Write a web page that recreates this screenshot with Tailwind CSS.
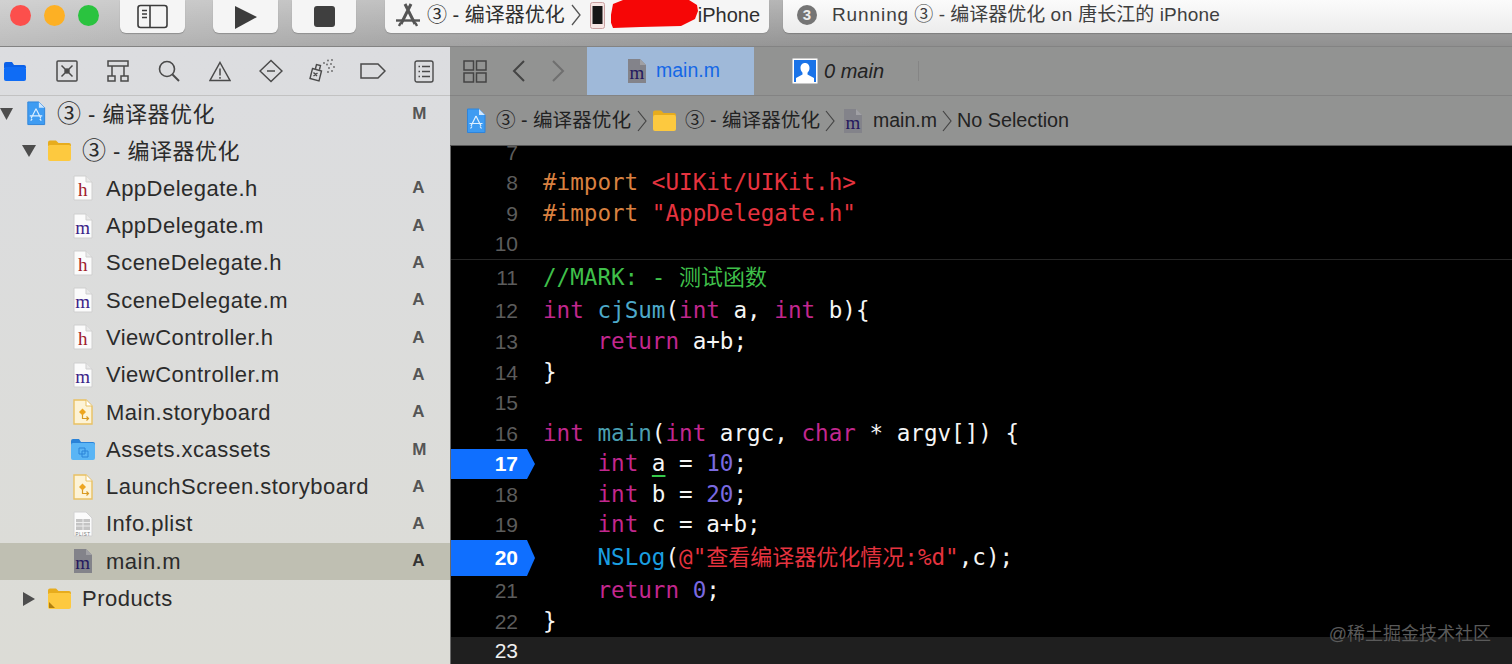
<!DOCTYPE html>
<html lang="zh">
<head>
<meta charset="UTF-8">
<title>Xcode</title>
<script src="https://cdn.jsdelivr.net/npm/@tailwindcss/browser@4"></script>
</head>
<body class="h-[664px] w-[1512px] overflow-hidden bg-black font-['Liberation_Sans','Noto_Sans_CJK_SC',sans-serif]">

<!-- shared file icons -->
<svg class="hidden">
  <symbol id="doc-h" viewBox="0 0 20 26"><path d="M1 1h12l6 6v18H1z" fill="#fbfbfb" stroke="#cfcfcf"/><path d="M13 1v6h6" fill="#e8e8e8" stroke="#cfcfcf"/><text x="10" y="21" text-anchor="middle" font-family="Liberation Serif" font-size="19" fill="#a01c2c">h</text></symbol>
  <symbol id="doc-m" viewBox="0 0 20 26"><path d="M1 1h12l6 6v18H1z" fill="#fbfbfb" stroke="#cfcfcf"/><path d="M13 1v6h6" fill="#e8e8e8" stroke="#cfcfcf"/><text x="10" y="21" text-anchor="middle" font-family="Liberation Serif" font-size="19" fill="#3b2488">m</text></symbol>
  <symbol id="doc-sel" viewBox="0 0 20 26"><path d="M1 1h12l6 6v18H1z" fill="#83838a"/><path d="M13 1l6 6h-6z" fill="#a0a0a4"/><text x="10" y="21" text-anchor="middle" font-family="Liberation Serif" font-size="19" fill="#25195e">m</text></symbol>
  <symbol id="doc-story" viewBox="0 0 20 26"><path d="M1 1h12l6 6v18H1z" fill="#fdf3d6" stroke="#e9c163" stroke-width="1.4"/><path d="M13 1v6h6" fill="#fff" stroke="#e9c163"/><path d="M9.500 9.500l3.500 3.500-3.500 3.500L6 13z" fill="#eda51f"/><path d="M9.500 16v3.500h6M13.500 17.500l2 2-2 2" fill="none" stroke="#d99a22" stroke-width="1.200"/></symbol>
  <symbol id="doc-plist" viewBox="0 0 20 26"><path d="M1 1h12l6 6v18H1z" fill="#fbfbfb" stroke="#d2d2d2"/><path d="M3 8h14v11H3z" fill="#c4c4c4"/><path d="M3 11.500h14M3 15h14M10 8v11" stroke="#ededed"/><text x="10" y="24.500" text-anchor="middle" font-family="Liberation Sans" font-size="4.500" fill="#777">PLIST</text></symbol>
  <symbol id="folder-y" viewBox="0 0 25 23"><path d="M1 3.500A2 2 0 0 1 3 1.500h6l2.500 2.500H22a2 2 0 0 1 2 2V7H1z" fill="#e7ac1d"/><rect x="1" y="6" width="23" height="16" rx="2" fill="#fdc93f"/></symbol>
  <symbol id="app-doc" viewBox="0 0 20 26"><path d="M1.500 1h11.500l6 6v17.500H1.500z" fill="#3f9cf2" stroke="#2f84da" stroke-linejoin="round"/><path d="M13 1l6 6h-6z" fill="#cfe7ff"/><path d="M10 8l-5 10M10 8l5 10M3.500 15.500h13M6 18.500l-1.500 2M14 18.500l1.500 2" stroke="#dff0ff" stroke-width="1.200" fill="none"/></symbol>
</svg>

<!-- window toolbar -->
<header class="relative flex h-[47px] items-start border-b border-[#838383] bg-[linear-gradient(to_bottom,#ffffff50,#ffffff00),linear-gradient(to_right,#bdbdbd,#a2a2a2_30%,#909090_60%)]">
  <div class="flex w-[120px] gap-[13px] pt-[5px] pl-[10px]">
    <span class="size-[21px] rounded-full bg-[#fc4f4c]"></span>
    <span class="size-[21px] rounded-full bg-[#fdb024]"></span>
    <span class="size-[21px] rounded-full bg-[#2ac33f]"></span>
  </div>
  <div class="flex h-[33px] w-[65px] items-center justify-center rounded-b-md bg-[#f5f5f5] shadow-[0_1px_1px_#8f8f8f]">
    <svg width="31" height="25" viewBox="0 0 31 25" fill="none" stroke="#3c3c3c" stroke-width="1.600"><rect x="1" y="1.500" width="29" height="22" rx="2.500"/><path d="M13 1.500v22M5 6.500h5M5 10h5M5 13.500h5"/></svg>
  </div>
  <div class="ml-[28px] flex h-[33px] w-[65px] items-center justify-center rounded-b-md bg-[#f5f5f5] shadow-[0_1px_1px_#8f8f8f]">
    <svg width="24" height="24" viewBox="0 0 24 24"><path d="M1 1l22 11L1 24z" fill="#3c3c3c"/></svg>
  </div>
  <div class="ml-[14px] flex h-[33px] w-[64px] items-center justify-center rounded-b-md bg-[#f5f5f5] shadow-[0_1px_1px_#8f8f8f]">
    <span class="size-[21px] rounded-[3px] bg-[#3f3f3f]"></span>
  </div>
  <div class="relative ml-[29px] flex h-[33px] w-[384px] items-center rounded-b-md bg-[#f5f5f5] pb-[3px] pl-[10px] text-[20px] text-[#2e2e2e] shadow-[0_1px_1px_#8f8f8f]">
    <svg width="26" height="26" viewBox="0 0 26 26" fill="none" stroke="#555" stroke-width="3"><path d="M10 2l10 20M16 2L6 22"/><path d="M1 18.500h24" stroke-width="2.400"/><path d="M5.500 21l-1.500 3M20.500 21l1.500 3" stroke-width="2.400"/></svg>
    <span class="ml-[6px] whitespace-pre">③ - 编译器优化</span>
    <svg class="ml-[6px]" width="10" height="24" viewBox="0 0 10 24" fill="none" stroke="#555" stroke-width="1.300"><path d="M1 2l8 10-8 10"/></svg>
    <svg class="ml-[9px]" width="15" height="27" viewBox="0 0 15 27"><rect x="0.500" y="0.500" width="14" height="26" rx="2" fill="#f6e5e3" stroke="#c9a0a0"/><rect x="2.500" y="4" width="10" height="18" fill="#161616"/></svg>
    <span class="ml-[93px]">iPhone</span>
    <svg class="absolute top-0 left-[226px]" width="90" height="29" viewBox="0 0 90 29"><path d="M2 4L12 0h66l8 5 1 6-3 8-14 7-40 1-28 1-3-8z" fill="#f60606"/></svg>
  </div>
  <div class="ml-[14px] flex h-[33px] flex-1 items-center rounded-bl-md bg-gradient-to-b from-[#fbfbfb] to-[#ececec] pb-[3px] pl-[14px] text-[19px] whitespace-pre text-[#3f3f3f] shadow-[0_1px_1px_#7f7f7f]">
    <span class="flex size-[20px] items-center justify-center rounded-full bg-[#757575] text-[15px] font-bold text-[#ececec]">3</span>
    <span class="ml-[15px]"><span class="tracking-[0.9px]">Running</span> ③ - 编译器优化 <span class="tracking-[0.7px]">on</span> 唐长江的 <span class="tracking-[0.2px]">iPhone</span></span>
  </div>
</header>

<div class="flex h-[617px]">
  <!-- navigator -->
  <aside class="w-[450px] shrink-0 bg-gradient-to-b from-[#dcdde0] to-[#dcdcd6] text-[22px] tracking-[0.48px] text-[#2b2b2b]">
    <nav class="flex h-[49px] items-center border-b border-[#c2c2c2]">
      <div class="flex w-[30px] justify-center"><svg width="24" height="21" viewBox="0 0 24 21"><path d="M1 3a2 2 0 0 1 2-2h6l2 3h10a2 2 0 0 1 2 2v1H1z" fill="#0a60e8"/><rect x="1" y="6" width="22" height="14" rx="2" fill="#0f6cf5"/></svg></div>
      <div class="ml-[11px] flex w-[51px] justify-center"><svg width="22" height="22" viewBox="0 0 22 22" fill="none" stroke="#4a4a4a" stroke-width="1.500"><rect x="1" y="1" width="20" height="20" rx="1"/><path d="M5.500 5.500l4 4M16.500 5.500l-4 4M5.500 16.500l4-4M16.500 16.500l-4-4"/><circle cx="11" cy="11" r="2" fill="#4a4a4a"/></svg></div>
      <div class="flex w-[51px] justify-center"><svg width="22" height="22" viewBox="0 0 22 22" fill="none" stroke="#4a4a4a" stroke-width="1.500"><rect x="1" y="1" width="20" height="5"/><path d="M5 6v10M17 6v10"/><rect x="1" y="16" width="7" height="5"/><rect x="14" y="16" width="7" height="5"/></svg></div>
      <div class="flex w-[51px] justify-center"><svg width="22" height="22" viewBox="0 0 22 22" fill="none" stroke="#4a4a4a" stroke-width="1.600"><circle cx="9" cy="9" r="7.500"/><path d="M14.500 14.500l6.500 6.500" stroke-width="2"/></svg></div>
      <div class="flex w-[51px] justify-center"><svg width="22" height="21" viewBox="0 0 22 21" fill="none" stroke="#4a4a4a" stroke-width="1.500"><path d="M11 1.500L21 19.500H1z"/><path d="M11 7.500v7M11 16v1.800"/></svg></div>
      <div class="flex w-[51px] justify-center"><svg width="24" height="24" viewBox="0 0 24 24" fill="none" stroke="#4a4a4a" stroke-width="1.500"><path d="M12 1.500L23 12 12 22.500 1 12z"/><path d="M8 12h8"/></svg></div>
      <div class="flex w-[51px] justify-center"><svg width="26" height="24" viewBox="0 0 26 24" fill="none" stroke="#4a4a4a" stroke-width="1.400"><path d="M3.500 9.500l9 2.500-2.500 10-9-2.500zM6.500 9.500l1-4 4 1-1 4M4.500 13.500l3.500 3.500M8.500 14l-4 3"/><g fill="#666" stroke="none"><circle cx="15" cy="4" r=".9"/><circle cx="19" cy="1.500" r=".9"/><circle cx="23" cy="1" r=".9"/><circle cx="18" cy="5.500" r=".9"/><circle cx="22" cy="5" r=".9"/><circle cx="25" cy="8" r=".9"/><circle cx="20" cy="9" r=".9"/><circle cx="23" cy="12" r=".9"/><circle cx="19" cy="13" r=".9"/></g></svg></div>
      <div class="flex w-[51px] justify-center"><svg width="26" height="16" viewBox="0 0 26 16" fill="none" stroke="#4a4a4a" stroke-width="1.500"><path d="M1 1h17l7 7-7 7H1z"/></svg></div>
      <div class="flex w-[51px] justify-center"><svg width="20" height="23" viewBox="0 0 20 23" fill="none" stroke="#4a4a4a" stroke-width="1.400"><rect x="1" y="1" width="18" height="21" rx="2"/><path d="M4.500 6.500h1.500M8 6.500h8M4.500 11.500h1.500M8 11.500h8M4.500 16.500h1.500M8 16.500h8"/></svg></div>
    </nav>
    <ul class="mt-[-1px]">
      <li class="flex h-[37.300px] items-center">
        <svg width="13" height="12" viewBox="0 0 13 12"><path d="M0 0h13L6.500 12z" fill="#4d4d4d"/></svg>
        <svg class="ml-[13px]" width="20" height="25"><use href="#app-doc"/></svg>
        <span class="ml-[11px] whitespace-pre"><span class="text-[24px]">③</span> - 编译器优化</span>
        <span class="mr-[23px] ml-auto text-[17px] font-bold text-[#555]">M</span>
      </li>
      <li class="flex h-[37.300px] items-center pl-[22px]">
        <svg width="14" height="12" viewBox="0 0 14 12"><path d="M0 0h14L7 12z" fill="#4d4d4d"/></svg>
        <svg class="ml-[11px]" width="25" height="23"><use href="#folder-y"/></svg>
        <span class="ml-[10px] whitespace-pre"><span class="text-[24px]">③</span> - 编译器优化</span>
      </li>
      <li class="flex h-[37.300px] items-center pl-[73px]"><svg width="20" height="26"><use href="#doc-h"/></svg><span class="ml-[13px]">AppDelegate.h</span><span class="mr-[25px] ml-auto text-[17px] font-bold text-[#555]">A</span></li>
      <li class="flex h-[37.300px] items-center pl-[73px]"><svg width="20" height="26"><use href="#doc-m"/></svg><span class="ml-[13px]">AppDelegate.m</span><span class="mr-[25px] ml-auto text-[17px] font-bold text-[#555]">A</span></li>
      <li class="flex h-[37.300px] items-center pl-[73px]"><svg width="20" height="26"><use href="#doc-h"/></svg><span class="ml-[13px]">SceneDelegate.h</span><span class="mr-[25px] ml-auto text-[17px] font-bold text-[#555]">A</span></li>
      <li class="flex h-[37.300px] items-center pl-[73px]"><svg width="20" height="26"><use href="#doc-m"/></svg><span class="ml-[13px]">SceneDelegate.m</span><span class="mr-[25px] ml-auto text-[17px] font-bold text-[#555]">A</span></li>
      <li class="flex h-[37.300px] items-center pl-[73px]"><svg width="20" height="26"><use href="#doc-h"/></svg><span class="ml-[13px]">ViewController.h</span><span class="mr-[25px] ml-auto text-[17px] font-bold text-[#555]">A</span></li>
      <li class="flex h-[37.300px] items-center pl-[73px]"><svg width="20" height="26"><use href="#doc-m"/></svg><span class="ml-[13px]">ViewController.m</span><span class="mr-[25px] ml-auto text-[17px] font-bold text-[#555]">A</span></li>
      <li class="flex h-[37.300px] items-center pl-[73px]"><svg width="20" height="26"><use href="#doc-story"/></svg><span class="ml-[13px]">Main.storyboard</span><span class="mr-[25px] ml-auto text-[17px] font-bold text-[#555]">A</span></li>
      <li class="flex h-[37.300px] items-center pl-[71px]">
        <svg width="24" height="23" viewBox="0 0 24 23"><path d="M0 3a2 2 0 0 1 2-2h6l2 3h12a2 2 0 0 1 2 2v1H0z" fill="#2a83d8"/><rect y="5" width="24" height="17" rx="2" fill="#5ab5f5"/><path d="M8 10h6v6H8zM11 13h6v6h-6z" fill="none" stroke="#2a83d8"/></svg>
        <span class="ml-[11px]">Assets.xcassets</span><span class="mr-[23px] ml-auto text-[17px] font-bold text-[#555]">M</span>
      </li>
      <li class="flex h-[37.300px] items-center pl-[73px]"><svg width="20" height="26"><use href="#doc-story"/></svg><span class="ml-[13px]">LaunchScreen.storyboard</span><span class="mr-[25px] ml-auto text-[17px] font-bold text-[#555]">A</span></li>
      <li class="flex h-[37.300px] items-center pl-[73px]"><svg width="20" height="26"><use href="#doc-plist"/></svg><span class="ml-[13px]">Info.plist</span><span class="mr-[25px] ml-auto text-[17px] font-bold text-[#555]">A</span></li>
      <li class="flex h-[37.300px] items-center bg-[#bfbfb2] pl-[73px]"><svg width="20" height="26"><use href="#doc-sel"/></svg><span class="ml-[13px]">main.m</span><span class="mr-[25px] ml-auto text-[17px] font-bold text-[#333]">A</span></li>
      <li class="flex h-[37.300px] items-center pl-[23px]">
        <svg width="12" height="14" viewBox="0 0 12 14"><path d="M0 0l12 7-12 7z" fill="#4d4d4d"/></svg>
        <svg class="ml-[12px]" width="25" height="23" viewBox="0 0 25 23"><use href="#folder-y" width="25" height="23"/><path d="M2 15l6 6H2z" fill="#b07f10"/></svg>
        <span class="ml-[10px]">Products</span>
      </li>
    </ul>
  </aside>

  <!-- editor -->
  <main class="flex min-w-0 flex-1 flex-col">
    <div class="flex h-[49px] items-center border-b border-[#838383] bg-[#929392] text-[20px]">
      <svg class="ml-[13px]" width="24" height="23" viewBox="0 0 24 23" fill="none" stroke="#444" stroke-width="1.500"><rect x="1" y="1" width="9.500" height="9"/><rect x="13.500" y="1" width="9.500" height="9"/><rect x="1" y="13" width="9.500" height="9"/><rect x="13.500" y="13" width="9.500" height="9"/></svg>
      <svg class="ml-[25px]" width="14" height="22" viewBox="0 0 14 22" fill="none" stroke="#444" stroke-width="2"><path d="M12 1L2 11l10 10"/></svg>
      <svg class="ml-[25px]" width="14" height="22" viewBox="0 0 14 22" fill="none" stroke="#6f6f6f" stroke-width="2"><path d="M2 1l10 10L2 21"/></svg>
      <div class="ml-[22px] flex h-full w-[167px] items-center bg-[#9fb9d9] pl-[40px] text-[19.500px] text-[#1467e6]">
        <svg width="20" height="26"><use href="#doc-sel"/></svg><span class="ml-[9px]">main.m</span>
      </div>
      <svg class="ml-[38px]" width="26" height="26" viewBox="0 0 26 26"><rect x="0.500" y="0.500" width="25" height="25" fill="#fff"/><rect x="2" y="2" width="22" height="22" fill="#1a73e8"/><path d="M13 5c3 0 4.500 2.300 4.500 5 0 2-1 3.700-2 4.700v1.800L22 20v4H4v-4l6.500-3.500v-1.800c-1-1-2-2.700-2-4.700 0-2.700 1.500-5 4.500-5z" fill="#fff"/></svg>
      <span class="ml-[6px] text-[#222] italic">0 main</span>
      <span class="ml-[34px] h-[20px] w-px bg-[#858585]"></span>
    </div>
    <div class="flex h-[50px] items-center border-b border-[#555] bg-[#929392] pl-[16px] text-[19.800px] whitespace-pre text-[#222]">
      <svg width="20" height="26"><use href="#app-doc"/></svg>
      <span class="ml-[10px] w-[134px] text-[19.600px]">③ - 编译器优化</span>
      <svg class="ml-[7px]" width="10" height="24" viewBox="0 0 10 24" fill="none" stroke="#444" stroke-width="1.200"><path d="M1 2l8 10-8 10"/></svg>
      <svg class="ml-[5px]" width="25" height="23"><use href="#folder-y"/></svg>
      <span class="ml-[8px] w-[134px] text-[19.600px]">③ - 编译器优化</span>
      <svg class="ml-[6px]" width="10" height="24" viewBox="0 0 10 24" fill="none" stroke="#444" stroke-width="1.200"><path d="M1 2l8 10-8 10"/></svg>
      <svg class="ml-[8px]" width="20" height="26"><use href="#doc-sel"/></svg>
      <span class="ml-[10px] text-[19.500px]">main.m</span>
      <svg class="ml-[5px]" width="10" height="24" viewBox="0 0 10 24" fill="none" stroke="#444" stroke-width="1.200"><path d="M1 2l8 10-8 10"/></svg>
      <span class="ml-[5px]">No Selection</span>
    </div>

    <div class="min-h-0 flex-1 overflow-hidden border-l border-[#6a6a6a] bg-black font-['DejaVu_Sans_Mono','Noto_Sans_CJK_SC',monospace] text-[22.600px] text-[#f5f5f5] [&>div>span]:whitespace-pre">
      <div class="mt-[-8px] flex h-[30px] items-center"><span class="w-[68px] pr-[1px] text-right font-['Liberation_Sans'] text-[21px] text-[#5c5c5c]">7</span></div>
      <div class="flex h-[30px] items-center"><span class="w-[68px] pr-[1px] text-right font-['Liberation_Sans'] text-[21px] text-[#5c5c5c]">8</span><span class="ml-[24px] text-[#d98040]">#import <span class="text-[#e5333f]">&lt;UIKit/UIKit.h&gt;</span></span></div>
      <div class="flex h-[31px] items-center"><span class="w-[68px] pr-[1px] text-right font-['Liberation_Sans'] text-[21px] text-[#5c5c5c]">9</span><span class="ml-[24px] text-[#d98040]">#import <span class="text-[#e5333f]">"AppDelegate.h"</span></span></div>
      <div class="flex h-[31px] items-center border-b border-[#262626]"><span class="w-[68px] pr-[1px] text-right font-['Liberation_Sans'] text-[21px] text-[#5c5c5c]">10</span></div>
      <div class="flex h-[35px] items-center"><span class="w-[68px] pr-[1px] text-right font-['Liberation_Sans'] text-[21px] text-[#5c5c5c]">11</span><span class="ml-[24px] text-[#3fbf4a]">//MARK: - <span class="text-[22px]">测试函数</span></span></div>
      <div class="flex h-[32px] items-center"><span class="w-[68px] pr-[1px] text-right font-['Liberation_Sans'] text-[21px] text-[#5c5c5c]">12</span><span class="ml-[24px]"><span class="text-[#c2278e]">int</span> <span class="text-[#4da9c9]">cjSum</span>(<span class="text-[#c2278e]">int</span> a, <span class="text-[#c2278e]">int</span> b){</span></div>
      <div class="flex h-[30px] items-center"><span class="w-[68px] pr-[1px] text-right font-['Liberation_Sans'] text-[21px] text-[#5c5c5c]">13</span><span class="ml-[24px]">    <span class="text-[#c2278e]">return</span> a+b;</span></div>
      <div class="flex h-[31px] items-center"><span class="w-[68px] pr-[1px] text-right font-['Liberation_Sans'] text-[21px] text-[#5c5c5c]">14</span><span class="ml-[24px]">}</span></div>
      <div class="flex h-[30px] items-center"><span class="w-[68px] pr-[1px] text-right font-['Liberation_Sans'] text-[21px] text-[#5c5c5c]">15</span></div>
      <div class="flex h-[31px] items-center"><span class="w-[68px] pr-[1px] text-right font-['Liberation_Sans'] text-[21px] text-[#5c5c5c]">16</span><span class="ml-[24px]"><span class="text-[#c2278e]">int</span> <span class="text-[#4a9fb0]">main</span>(<span class="text-[#c2278e]">int</span> argc, <span class="text-[#c2278e]">char</span> * argv[]) {</span></div>
      <div class="flex h-[30px] items-center"><span class="flex h-full w-[84px] items-center justify-end bg-[#0f6fff] pr-[17px] font-['Liberation_Sans'] text-[21px] font-bold text-white [clip-path:polygon(0_0,76px_0,84px_50%,76px_100%,0_100%)]">17</span><span class="ml-[8px]">    <span class="text-[#c2278e]">int</span> <span class="underline decoration-[#35c94a] decoration-2 underline-offset-4">a</span> = <span class="text-[#7a6ae0]">10</span>;</span></div>
      <div class="flex h-[31px] items-center"><span class="w-[68px] pr-[1px] text-right font-['Liberation_Sans'] text-[21px] text-[#5c5c5c]">18</span><span class="ml-[24px]">    <span class="text-[#c2278e]">int</span> b = <span class="text-[#7a6ae0]">20</span>;</span></div>
      <div class="flex h-[30px] items-center"><span class="w-[68px] pr-[1px] text-right font-['Liberation_Sans'] text-[21px] text-[#5c5c5c]">19</span><span class="ml-[24px]">    <span class="text-[#c2278e]">int</span> c = a+b;</span></div>
      <div class="flex h-[36px] items-center"><span class="flex h-full w-[84px] items-center justify-end bg-[#0f6fff] pr-[17px] font-['Liberation_Sans'] text-[21px] font-bold text-white [clip-path:polygon(0_0,76px_0,84px_50%,76px_100%,0_100%)]">20</span><span class="ml-[8px]">    <span class="text-[#1a9fe0]">NSLog</span>(<span class="text-[#e5333f]">@"<span class="text-[22px]">查看编译器优化情况</span>:%d"</span>,c);</span></div>
      <div class="flex h-[30px] items-center"><span class="w-[68px] pr-[1px] text-right font-['Liberation_Sans'] text-[21px] text-[#5c5c5c]">21</span><span class="ml-[24px]">    <span class="text-[#c2278e]">return</span> <span class="text-[#7a6ae0]">0</span>;</span></div>
      <div class="flex h-[31px] items-center"><span class="w-[68px] pr-[1px] text-right font-['Liberation_Sans'] text-[21px] text-[#5c5c5c]">22</span><span class="ml-[24px]">}</span></div>
      <div class="flex h-[27px] items-center bg-[#1f1f1f]"><span class="w-[68px] pr-[1px] text-right font-['Liberation_Sans'] text-[21px] text-[#f0f0f0]">23</span></div>
    </div>
  </main>
</div>

<div class="absolute top-[621px] right-[21px] text-[18px] text-[#5a5a5a]">@稀土掘金技术社区</div>
</body>
</html>
